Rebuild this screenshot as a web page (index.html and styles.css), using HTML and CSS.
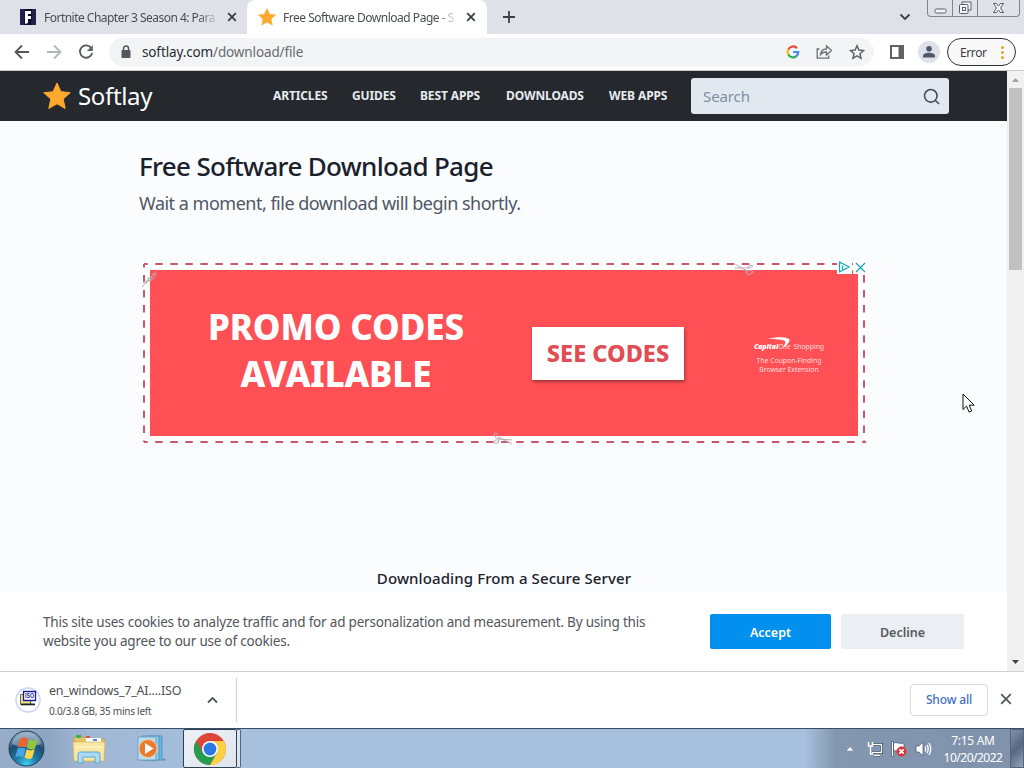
FILE: index.html
```html
<!DOCTYPE html>
<html lang="en">
<head>
  <meta charset="UTF-8">
  <title>Free Software Download Page - Softlay</title>
  <link rel="stylesheet" href="styles.css">
</head>
<body>

  <div class="tabstrip">
    <div class="tab">
      <svg class="favicon" width="16" height="16" viewBox="0 0 16 16"><path fill="#24204f" d="M0 0h16v16H0z"/><path fill="#0d0b25" d="M5 0h7l-1 16H4z"/><path fill="#fff" d="M5 2h6v3H8v2h3v3H8v4l-3 1z"/></svg>
      <span class="tab-title t1">Fortnite Chapter 3 Season 4: Para</span>
      <svg class="tab-close" width="10" height="10" viewBox="0 0 10 10"><path d="M1.2 1.2l7.6 7.6M8.8 1.2L1.2 8.8"/></svg>
    </div>
    <div class="tab active">
      <svg class="favicon" width="18" height="18" viewBox="0 0 28 28"><use href="#star"/></svg>
      <span class="tab-title t2">Free Software Download Page - S</span>
      <svg class="tab-close" width="10" height="10" viewBox="0 0 10 10"><path d="M1.2 1.2l7.6 7.6M8.8 1.2L1.2 8.8"/></svg>
    </div>
    <svg class="new-tab" width="12" height="12" viewBox="0 0 12 12"><path d="M6 0v12M0 6h12"/></svg>
    <svg class="tab-search" width="12" height="8" viewBox="0 0 12 8"><path d="M1.5 1.5L6 6l4.500-4.500"/></svg>
    <div class="window-buttons">
      <div><svg width="13" height="6" viewBox="0 0 13 6"><rect x="1" y="1" width="11" height="4" rx="1.500"/></svg></div>
      <div><svg width="14" height="14" viewBox="0 0 14 14"><path d="M4 4V1h9v8h-3"/><rect x="1.500" y="3.500" width="8.500" height="9" rx="1"/><rect x="4.500" y="6.500" width="3" height="3"/></svg></div>
      <div><svg width="13" height="12" viewBox="0 0 13 12"><path d="M1.500 1.500h3l2 2.500 2-2.500h3L8.500 6l3 4.500h-3L6.500 8l-2 2.500h-3L4.500 6z"/></svg></div>
    </div>
  </div>

  <div class="toolbar">
    <div class="nav-icons">
      <svg width="16" height="16" viewBox="0 0 16 16"><path d="M15 8H2M8 1.500L1.500 8 8 14.500"/></svg>
      <svg class="off" width="16" height="16" viewBox="0 0 16 16"><path d="M1 8h13M8 1.500L14.500 8 8 14.500"/></svg>
      <svg width="16" height="16" viewBox="0 0 16 16"><path d="M13.300 4A6.200 6.200 0 1 0 14.200 9"/><path d="M14.800 1v6H8.800z" style="fill:#5f6368;stroke:none"/></svg>
    </div>
    <div class="omnibox">
      <svg class="lock" width="10" height="14" viewBox="0 0 10 14"><rect x="0.500" y="5" width="9" height="8" rx="1"/><path d="M2.500 5.500V3.500a2.500 2.500 0 0 1 5 0v2"/></svg>
      <span class="url">softlay.com<span>/download/file</span></span>
      <div class="omni-icons">
        <svg width="14" height="14" viewBox="0 0 14 14" fill="none" stroke-width="2.200"><path stroke="#ea4335" d="M11 3.200A5.300 5.300 0 0 0 2.300 4.500"/><path stroke="#fbbc05" d="M2.300 4.500a5.300 5.300 0 0 0 0 5"/><path stroke="#34a853" d="M2.300 9.500a5.300 5.300 0 0 0 8.100 1.600"/><path stroke="#4285f4" d="M10.400 11.100A5 5 0 0 0 12.200 7H7.200"/></svg>
        <svg width="17" height="16" viewBox="0 0 17 16" fill="none" stroke="#6b6f74" stroke-width="1.300"><path d="M3.500 5H1.200v9.200h11.500V11.500"/><path d="M4.500 10.500C5 6.500 7.500 5 10.500 5V2L15.500 6.500 10.500 11V8C8 8 6 8.500 4.500 10.500z"/></svg>
        <svg width="16" height="16" viewBox="0 0 16 16" fill="none" stroke="#5f6368" stroke-width="1.500"><path d="M8 1.800l1.900 4.300 4.600.5-3.500 3.100 1 4.600L8 11.900l-4 2.400 1-4.600L1.500 6.600l4.600-.5z"/></svg>
      </div>
    </div>
    <svg class="side-panel" width="14" height="14" viewBox="0 0 14 14"><path fill="#5f6368" d="M0 0h14v14H0z"/><path fill="#fff" d="M2 2h6.500v10H2z"/></svg>
    <svg class="profile" width="22" height="22" viewBox="0 0 22 22"><circle cx="11" cy="11" r="11" fill="#dee1e9"/><circle cx="11" cy="7.800" r="2.800" fill="#4f586a"/><path fill="#4f586a" d="M5 16.500V15c0-2.200 3-3.300 6-3.300s6 1.100 6 3.300v1.500z"/></svg>
    <div class="error-chip"><span>Error</span><i></i></div>
  </div>

  <div class="viewport">
    <div class="page">
      <div class="site-header">
        <svg class="logo-star" width="28" height="28" viewBox="0 0 28 28"><path id="star" fill="#fca92e" stroke="#fca92e" stroke-width="1" stroke-linejoin="round" d="M14 1l3.900 8.700 9.300 1-7 6.300 2 9.500L14 21.800 5.800 26.500l2-9.500-7-6.300 9.300-1z"/></svg>
        <span class="logo-text">Softlay</span>
        <div class="site-nav">
          <a>ARTICLES</a>
          <a>GUIDES</a>
          <a>BEST APPS</a>
          <a>DOWNLOADS</a>
          <a>WEB APPS</a>
        </div>
        <div class="search">
          <span>Search</span>
          <svg width="17" height="17" viewBox="0 0 17 17"><circle cx="7.800" cy="7.800" r="6.300"/><path d="M12.200 12.200l3.800 3.800"/></svg>
        </div>
      </div>

      <div class="content">
        <h1>Free Software Download Page</h1>
        <p class="subtitle">Wait a moment, file download will begin shortly.</p>

        <div class="ad">
          <svg class="ad-border" width="724" height="180" viewBox="0 0 724 180">
            <g stroke="#c95768" stroke-width="2" stroke-dasharray="7.500 7.540">
              <path stroke-dashoffset="3.800" d="M1 1h722M1 179h722"/>
              <path stroke-dashoffset="4" d="M1 1v178M721 1v178"/>
            </g>
          </svg>
          <div class="ad-red">
            <div class="ad-promo"><div>PROMO CODES</div><div class="line2">AVAILABLE</div></div>
            <div class="ad-button"><span>SEE CODES</span></div>
            <div class="ad-brand">
              <div class="brand-name"><b>Capital</b><i>One</i><span>Shopping</span>
                <svg class="swoosh" width="26" height="12" viewBox="0 0 26 12"><path fill="#fff" d="M2 2C12-1 22 0 23.500 2.500c.5 3-3 6-6 8C18 8 20 6 19 4 17 2.500 9 2 2 2z"/></svg>
              </div>
              <div>The Coupon-Finding</div>
              <div>Browser Extension</div>
            </div>
          </div>
          <svg class="scissors s1" width="16" height="17" viewBox="0 0 16 17"><path d="M1 16L13 3M2 11l9-2M5 13l3-7M10 7l3-5 2 0-2 5-4 2"/></svg>
          <svg class="scissors s2" width="20" height="13" viewBox="0 0 20 13"><path d="M1 1l12 7M1 5l13 0M13 8l4-1 2 2-4 3-3-2zM13 5l3-3 3 1-3 2z"/></svg>
          <svg class="scissors s3" width="20" height="13" viewBox="0 0 20 13"><path d="M19 12L7 6M19 8L6 7M7 6L3 1 1 2l2 4 5 1M6 8l-4 0-1 3 4 0z"/></svg>
          <svg class="ad-choices" width="29" height="14" viewBox="0 0 29 14"><path fill="#fff" d="M0 0h15v14H0zM16 0h13v14H16z"/><path fill="none" stroke="#16a9bd" stroke-width="1.300" d="M2.500 2v10l9.500-5zM5.500 5.500v4M19 3l9 9M28 3l-9 9"/></svg>
        </div>

        <p class="secure">Downloading From a Secure Server</p>
      </div>

      <div class="cookie-bar">
        <p>This site uses cookies to analyze traffic and for ad personalization and measurement. By using this<br>website you agree to our use of cookies.</p>
        <div class="accept">Accept</div>
        <div class="decline">Decline</div>
      </div>
    </div>

    <div class="scrollbar">
      <svg width="7" height="4" viewBox="0 0 7 4"><path fill="#a3a3a3" d="M0 4l3.500-4L7 4z"/></svg>
      <div class="thumb"></div>
      <svg class="down" width="7" height="4" viewBox="0 0 7 4"><path fill="#444" d="M0 0l3.500 4L7 0z"/></svg>
    </div>
  </div>

  <div class="downloads">
    <div class="download-item">
      <svg width="26" height="26" viewBox="0 0 26 26"><circle cx="13" cy="13" r="12" fill="#fff" stroke="#c5d5f3" stroke-width="1.500"/><path fill="#e9ec8d" stroke="#6c6d2c" d="M5.500 7.500h10v10h-10z"/><path fill="#222" d="M6 16.500h14v1.800H6z"/><path fill="#fff" stroke="#1a1a9c" stroke-width="1.300" d="M8.500 4.500h12v9h-12z"/><text x="10" y="11.300" font-family="Liberation Sans" font-size="6.500" font-weight="bold" fill="#1a1a9c" textLength="9" lengthAdjust="spacingAndGlyphs">ISO</text></svg>
      <div class="file">
        <div class="file-name">en_windows_7_AI....ISO</div>
        <div class="file-status">0.0/3.8 GB, 35 mins left</div>
      </div>
      <svg class="up" width="11" height="8" viewBox="0 0 11 8"><path d="M1 6.500L5.500 2 10 6.500"/></svg>
    </div>
    <div class="show-all">Show all</div>
    <svg class="shelf-close" width="12" height="12" viewBox="0 0 12 12"><path d="M1.200 1.200l9.600 9.600M10.800 1.200l-9.600 9.600"/></svg>
  </div>

  <div class="taskbar">
    <svg class="start" width="37" height="37" viewBox="0 0 37 37">
      <defs>
        <radialGradient id="orb" cx="0.5" cy="0.95" r="0.9"><stop offset="0" stop-color="#3fd0f0"/><stop offset="0.35" stop-color="#1f79a8"/><stop offset="0.7" stop-color="#1f4c72"/><stop offset="1" stop-color="#8fa9bf"/></radialGradient>
      </defs>
      <circle cx="18.500" cy="18.500" r="17.500" fill="url(#orb)" stroke="#21405c"/>
      <path fill="#b9cbd9" opacity=".5" d="M4 14C6 6 13 3 18.500 3S31 6 33 14c-9 4-20 4-29 0z"/>
      <path fill="#f0642c" d="M12 9c2.500-2 5.500-2 8-.5l-2.300 9c-2.500-1.500-5.500-1.500-8 0z"/>
      <path fill="#93c83e" d="M21 9.500c2.500 1.500 5.500 1.500 8.500 0l-2.500 9c-3 1.500-5.500 1-8-.5z"/>
      <path fill="#48a5e4" d="M9.500 18.800c2.500-1.500 5.500-1.500 8 0l-2.200 8.500c-2.500-1.500-5.500-1.500-8 0z"/>
      <path fill="#fdd54a" d="M18.700 19.300c2.500 1.500 5 1.500 8 0l-2.500 8.700c-2.500 1.500-5 1-7.700-.5z"/>
    </svg>
    <svg class="explorer" width="34" height="30" viewBox="0 0 34 30"><path fill="#e4c468" stroke="#b99a48" stroke-width=".7" d="M2 3h11l2 2h17v22H2z"/><path fill="#fff" d="M14 4h15v5H14z"/><path fill="#3fae50" d="M4 1h5v3H4z"/><path fill="#d9533f" d="M14 2h4v2h-4z"/><path fill="#4a90d4" d="M21 5h4v2h-4z"/><path fill="#f7e7a0" stroke="#d3b563" stroke-width=".7" d="M1 8h32l-1 19H2z"/><path fill="none" stroke="#fffbe0" d="M3 13h28"/><path fill="#a9d9f4" stroke="#5fa8d3" d="M6 29V20q0-2 2-2h18q2 0 2 2v9h-5v-6H11v6z"/></svg>
    <svg class="player" width="31" height="27" viewBox="0 0 31 27"><path fill="#68b6e2" stroke="#4d86ad" stroke-width=".7" d="M9 1h16v22l4 2H9z"/><path fill="#8fcbea" stroke="#4d86ad" stroke-width=".7" d="M5 1h17v24H5z"/><path fill="#b8dcf0" stroke="#5b93b8" stroke-width=".7" d="M1 2h18v23H1z"/><circle cx="11" cy="13.500" r="9" fill="#ec7a2c" stroke="#f6c8a0"/><path fill="#fff" d="M8 8l8.500 5.500L8 19z"/></svg>
    <div class="task-chrome">
      <svg width="34" height="34" viewBox="0 0 34 34"><circle cx="17" cy="17" r="16" fill="#de4437"/><path fill="#279b50" d="M3.140 9A16 16 0 0 0 17 33L23.930 21 17 17 10.070 21z"/><path fill="#fdcf43" d="M30.860 9A16 16 0 0 1 17 33l6.930-12L17 9z"/><circle cx="17" cy="17" r="8" fill="#fff"/><circle cx="17" cy="17" r="6.400" fill="#2d76e8"/></svg>
    </div>
    <div class="task-stack"></div>
    <div class="tray">
      <svg class="tray-up" width="8" height="5" viewBox="0 0 8 5"><path fill="#fff" stroke="#5b6b83" stroke-width=".5" d="M0 5l4-4.500L8 5z"/></svg>
      <svg width="16" height="16" viewBox="0 0 16 16" fill="none"><path stroke="#35435c" stroke-width="3" d="M5 3.500h9.500v8H5M7 14h6"/><path stroke="#fff" stroke-width="1.400" d="M5.500 3.500h9v8H5M7 14.200h6M1.500 1v4h4V1M3.500 5v8H6"/></svg>
      <svg width="16" height="16" viewBox="0 0 16 16"><path fill="#fff" stroke="#3f4d65" stroke-width=".7" d="M.5.500h2v15h-2zM2.500 2C6 .5 8 3.500 13 2v8c-5 1-7-1-10.500 0z"/><circle cx="10.500" cy="10.500" r="5" fill="#d8343b"/><path stroke="#fff" stroke-width="1.700" d="M8.300 8.300l4.400 4.400M12.700 8.300l-4.400 4.400"/></svg>
      <svg width="17" height="16" viewBox="0 0 17 16"><path fill="#fff" stroke="#3f4d65" stroke-width=".7" d="M1 5h3l4-4v14l-4-4H1z"/><path fill="none" stroke="#fff" stroke-width="1.300" d="M10 5.500q1.500 2.500 0 5M12 3.800q2.500 4.200 0 8.400M14 2q3.500 6 0 12"/></svg>
      <div class="clock"><div class="time">7:15 AM</div><div class="date">10/20/2022</div></div>
    </div>
    <div class="show-desktop"></div>
  </div>

  <svg class="cursor" width="14" height="21" viewBox="0 0 14 21"><path fill="#fff" stroke="#111" d="M1 1v15.500l3.600-3.400 2.500 6 2.600-1.100-2.500-5.800h5z"/></svg>

</body>
</html>
```
FILE: styles.css
```css
body {
  margin: 0;
  width: 1024px;
  height: 768px;
  overflow: hidden;
  display: flex;
  flex-direction: column;
  position: relative;
  background-color: white;
  font-family: "Noto Sans", "Open Sans", sans-serif;
  white-space: nowrap;
}
svg {
  flex: none;
  display: block;
}
p, h1 {
  margin: 0;
}

/* tabs */
.tabstrip {
  height: 34px;
  flex: none;
  display: flex;
  align-items: center;
  background-color: #dee1e8;
}
.tab {
  width: 227px;
  height: 34px;
  display: flex;
  align-items: center;
  padding-left: 20px;
  color: #4b4d52;
}
.tab.active {
  width: 229px;
  padding-left: 11px;
  background-color: white;
  border-radius: 8px 8px 0 0;
}
.active .favicon {
  margin-right: -1px;
}
.tab-title {
  width: 175px;
  margin-left: 8px;
  font-size: 12px;
  -webkit-mask-image: linear-gradient(to right, #000 88%, transparent);
  mask-image: linear-gradient(to right, #000 88%, transparent);
}
.t1 {
  letter-spacing: -0.52px;
}
.t2 {
  letter-spacing: -0.48px;
}
.tab-close {
  margin-left: 8px;
}
.tab-close path, .new-tab path, .tab-search path {
  fill: none;
  stroke: #3c4043;
  stroke-width: 1.8;
}
.new-tab {
  margin-left: 16px;
}
.tab-search {
  margin-left: 384px;
}
.window-buttons {
  display: flex;
  align-self: flex-start;
  margin-left: 16px;
  height: 16px;
  border: 1px solid #80848d;
  border-top: none;
  border-radius: 0 0 4px 4px;
}
.window-buttons div {
  width: 24px;
  display: flex;
  align-items: center;
  justify-content: center;
  border-right: 1px solid #80848d;
}
.window-buttons div:first-child {
  align-items: flex-end;
  padding-bottom: 2px;
  height: 14px;
}
.window-buttons div:last-child {
  width: 41px;
  border-right: none;
}
.window-buttons svg * {
  fill: #f5f6f8;
  stroke: #5a5d63;
}

/* toolbar */
.toolbar {
  height: 36px;
  flex: none;
  display: flex;
  align-items: center;
  background-color: white;
  border-bottom: 1px solid #c9cacd;
}
.nav-icons {
  display: flex;
  gap: 16px;
  padding-left: 14px;
}
.nav-icons path {
  fill: none;
  stroke: #54575b;
  stroke-width: 1.8;
}
.nav-icons .off path {
  stroke: #b4b6b9;
}
.omnibox {
  width: 753px;
  height: 28px;
  margin-left: 15px;
  padding-left: 12px;
  display: flex;
  align-items: center;
  background-color: #f2f4f6;
  border-radius: 14px;
}
.lock rect {
  fill: #54575b;
}
.lock path {
  fill: none;
  stroke: #54575b;
  stroke-width: 1.5;
}
.url {
  margin-left: 11px;
  font-size: 13.5px;
  letter-spacing: -0.13px;
  color: #2b2d31;
}
.url span {
  color: #686b70;
}
.omni-icons {
  display: flex;
  align-items: center;
  gap: 16px;
  margin-left: auto;
  margin-right: 9px;
}
.side-panel {
  margin-left: 16px;
}
.profile {
  margin-left: 14px;
}
.error-chip {
  width: 67px;
  height: 26px;
  margin-left: 7px;
  display: flex;
  align-items: center;
  border: 1px solid #303134;
  border-radius: 15px;
  background-color: #f8f8f9;
}
.error-chip span {
  width: 28px;
  margin-left: 12px;
  font-size: 12px;
  letter-spacing: -0.4px;
  color: #3c3c3f;
}
.error-chip i {
  width: 3px;
  height: 3px;
  margin-left: 13px;
  border-radius: 50%;
  background-color: #e3a32f;
  box-shadow: 0 -5px #e3a32f, 0 5px #e3a32f;
}

/* web page */
.viewport {
  height: 600px;
  flex: none;
  display: flex;
}
.page {
  width: 1007px;
  display: flex;
  flex-direction: column;
  background-color: #fafcfe;
}
.site-header {
  height: 50px;
  flex: none;
  display: flex;
  align-items: center;
  background-color: #25282c;
}
.logo-star {
  margin-left: 43px;
}
.logo-text {
  width: 195px;
  margin-left: 7px;
  padding-bottom: 2px;
  font-size: 24px;
  letter-spacing: -0.35px;
  color: white;
}
.site-nav {
  display: grid;
  grid-template-columns: 79px 68px 86px 103px 82px;
  padding-bottom: 2px;
  font-size: 12px;
  font-weight: bold;
  letter-spacing: -0.1px;
  color: #e6ebf0;
}
.site-nav a {
  letter-spacing: -0.12px;
}
.search {
  width: 237px;
  height: 36px;
  padding: 0 9px 0 12px;
  display: flex;
  align-items: center;
  justify-content: space-between;
  background-color: #e2e8f0;
  border-radius: 3px;
  font-size: 15px;
  letter-spacing: -0.1px;
  color: #8090a3;
}
.search svg {
  fill: none;
  stroke: #3f4b5c;
  stroke-width: 1.6;
}
.content {
  height: 471px;
  flex: none;
  padding-left: 139px;
  color: #1a202c;
}
h1 {
  margin-top: 26px;
  font-size: 26px;
  line-height: 38px;
  font-weight: 500;
  letter-spacing: -0.68px;
}
.subtitle {
  margin-top: 5px;
  font-size: 18px;
  line-height: 26px;
  letter-spacing: -0.5px;
  color: #4f5864;
}
.ad {
  position: relative;
  width: 708px;
  height: 166px;
  margin-left: 4px;
  margin-top: 47px;
  padding: 7px 9px 7px 7px;
  background-color: white;
}
.ad-border {
  position: absolute;
  left: 0;
  top: 0;
}
.ad-red {
  height: 166px;
  display: flex;
  align-items: center;
  background-color: #ff5055;
  color: white;
}
.ad-promo {
  width: 290px;
  margin-left: 41px;
  padding-bottom: 7px;
  text-align: center;
  font-size: 35px;
  line-height: 47px;
  font-weight: 800;
  letter-spacing: -0.15px;
}
.ad-button {
  width: 152px;
  height: 53px;
  margin-left: 51px;
  display: flex;
  align-items: center;
  justify-content: center;
  background-color: white;
  box-shadow: 1px 2px 3px #a13438;
  color: #e14d54;
  font-size: 23.500px;
  font-weight: 800;
}
.ad-brand {
  width: 90px;
  margin-left: 60px;
  padding-top: 9px;
  text-align: center;
  font-size: 7px;
  line-height: 9px;
  letter-spacing: -0.1px;
  color: #ffd9d7;
}
.brand-name {
  position: relative;
  display: flex;
  justify-content: center;
  margin-bottom: 5px;
}
.brand-name b {
  font-style: italic;
  font-weight: 900;
  color: white;
}
.brand-name span {
  margin-left: 3px;
}
.swoosh {
  position: absolute;
  left: 22px;
  top: -5px;
}
.scissors {
  position: absolute;
  fill: none;
  stroke: #b5adb5;
}
.s1 {
  left: -2px;
  top: 8px;
}
.s2 {
  left: 591px;
  top: 0;
}
.s3 {
  left: 350px;
  top: 169px;
}
.ad-choices {
  position: absolute;
  left: 694px;
  top: -3px;
}
.secure {
  width: 730px;
  margin-top: 124px;
  text-align: center;
  font-size: 15px;
  line-height: 22px;
  font-weight: 500;
  letter-spacing: 0.1px;
}
.cookie-bar {
  height: 79px;
  display: flex;
  align-items: center;
  background-color: white;
}
.cookie-bar p {
  width: 667px;
  margin-left: 43px;
  padding-top: 1px;
  font-size: 13.5px;
  line-height: 19px;
  letter-spacing: -0.2px;
  color: #51565c;
}
.accept, .decline {
  width: 121px;
  height: 35px;
  border-radius: 2px;
  background-color: #0290ef;
  color: white;
  font-size: 12.500px;
  font-weight: 600;
  line-height: 37px;
  text-align: center;
}
.decline {
  width: 123px;
  margin-left: 10px;
  background-color: #ebeef2;
  color: #555b63;
}
.scrollbar {
  width: 17px;
  display: flex;
  flex-direction: column;
  align-items: center;
  background-color: #f1f1f1;
}
.scrollbar svg {
  margin-top: 7px;
}
.thumb {
  width: 13px;
  height: 182px;
  margin-top: 6px;
  background-color: #c1c1c1;
}
.scrollbar .down {
  margin-top: auto;
  margin-bottom: 7px;
}

/* download shelf */
.downloads {
  height: 56px;
  flex: none;
  display: flex;
  align-items: center;
  border-top: 1px solid #d0d1d4;
  background-color: white;
}
.download-item {
  width: 221px;
  height: 44px;
  padding-left: 15px;
  display: flex;
  align-items: center;
  border-right: 1px solid #cfd1d5;
}
.file {
  width: 158px;
  margin-left: 8px;
  padding-top: 1px;
  color: #4c4f54;
}
.file-name {
  font-size: 12.5px;
  line-height: 20px;
  letter-spacing: -0.2px;
}
.file-status {
  font-size: 10px;
  line-height: 20px;
  letter-spacing: -0.25px;
}
.up path, .shelf-close path {
  fill: none;
  stroke: #55585c;
  stroke-width: 1.8;
}
.show-all {
  width: 76px;
  height: 30px;
  margin-left: auto;
  margin-bottom: 1px;
  border: 1px solid #d6d9de;
  border-radius: 4px;
  line-height: 30px;
  text-align: center;
  font-size: 12px;
  font-weight: 500;
  letter-spacing: -0.15px;
  color: #4170c4;
}
.shelf-close {
  margin-left: 12px;
  margin-right: 12px;
  margin-bottom: 2px;
}

/* windows taskbar */
.taskbar {
  height: 39px;
  flex: none;
  display: flex;
  align-items: center;
  border-top: 1px solid #3b4d66;
  background: linear-gradient(to right, #98aec8, #8ea5c2 45px, #a0b8d6 90px, #a6c0de 250px, #a6c0de 805px, #8497b0 835px, #8092ab);
}
.start {
  margin-left: 8px;
}
.explorer {
  margin-left: 27px;
}
.player {
  margin-left: 31px;
}
.task-chrome {
  width: 52px;
  height: 37px;
  margin-left: 15px;
  border: 1px solid #2f4050;
  border-radius: 2px;
  display: flex;
  align-items: center;
  justify-content: center;
  background: linear-gradient(135deg, #edf1f5, #dfe5ee);
}
.task-stack {
  width: 3px;
  height: 37px;
  border: 1px solid #54667d;
  border-left: none;
  border-radius: 0 2px 2px 0;
  background-color: #dbe3ee;
}
.tray {
  margin-left: auto;
  display: flex;
  align-items: center;
  gap: 8px;
}
.tray-up {
  margin-right: 5px;
}
.clock {
  width: 60px;
  margin-left: 3px;
  text-align: center;
  font-size: 12px;
  line-height: 17px;
  color: white;
}
.time {
  letter-spacing: -0.3px;
}
.date {
  letter-spacing: -0.5px;
}
.show-desktop {
  width: 12px;
  height: 37px;
  margin-left: 7px;
  border: 1px solid #56657c;
  background: linear-gradient(135deg, #8293ab, #56677f 50%, #94a4ba);
}

.cursor {
  position: absolute;
  left: 962px;
  top: 393px;
}
```
